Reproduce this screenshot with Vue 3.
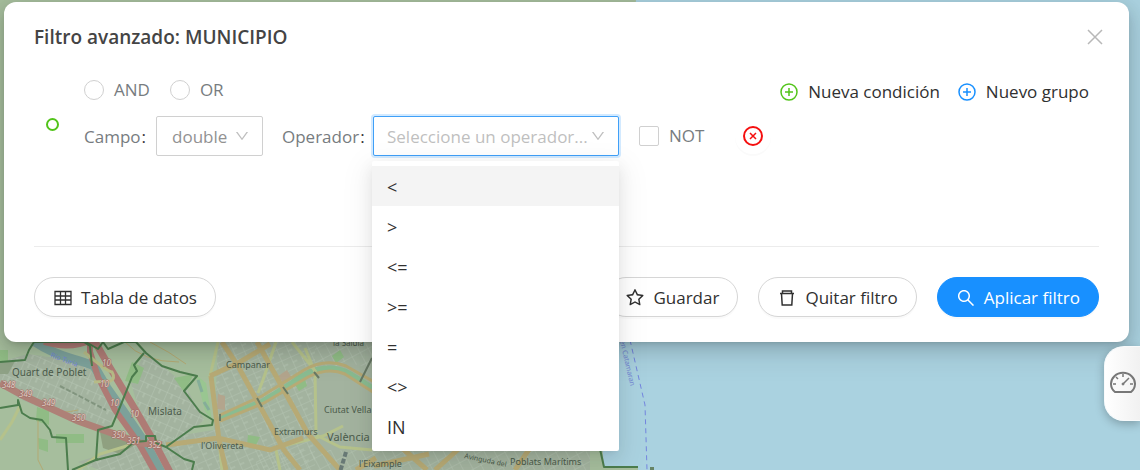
<script setup>
import { ref } from 'vue'

const logic = ref('')
const field = ref('double')
const operator = ref('')
const negate = ref(false)
const active = ref(0)
const operators = ['<', '>', '<=', '>=', '=', '<>', 'IN']

const down = 'M884 256h-75c-5.1 0-9.9 2.5-12.9 6.6L512 654.2 227.9 262.6c-3-4.1-7.8-6.6-12.9-6.6h-75c-6.5 0-10.3 7.4-6.5 12.7l352.6 486.1c12.8 17.6 39 17.6 51.7 0l352.6-486.1c3.9-5.3.1-12.7-6.4-12.7z'
const star = 'M908.1 353.1l-253.9-36.9L540.7 86.1c-3.1-6.3-8.2-11.4-14.5-14.5-15.8-7.8-35-1.3-42.9 14.5L369.8 316.2l-253.9 36.9c-7 1-13.4 4.3-18.3 9.3a32.05 32.05 0 00.6 45.3l183.7 179.1-43.4 252.9a31.95 31.95 0 0046.4 33.7L512 754l227.1 119.4c6.2 3.3 13.4 4.4 20.3 3.2 17.4-3 29.1-19.5 26.1-36.9l-43.4-252.9 183.7-179.1c5-4.9 8.3-11.3 9.3-18.3 2.7-17.5-9.5-33.7-27-36.3zM664.8 561.6l36.1 210.3L512 672.7 323.1 772l36.1-210.3-152.8-149L417.6 382 512 190.7 606.4 382l211.2 30.7-152.8 148.9z'
const search = 'M909.6 854.5L649.9 594.8C690.2 542.7 712 479 712 412c0-80.2-31.3-155.4-87.9-212.1-56.6-56.7-132-87.9-212.1-87.9s-155.5 31.3-212.1 87.9C143.2 256.5 112 331.8 112 412c0 80.1 31.3 155.5 87.9 212.1C256.5 680.8 331.8 712 412 712c67 0 130.6-21.8 182.7-62l259.7 259.6a8.2 8.2 0 0011.6 0l43.6-43.5a8.2 8.2 0 000-11.6zM570.4 570.4C528 612.7 471.8 636 412 636s-116-23.3-158.4-65.6C211.3 528 188 471.8 188 412s23.3-116.1 65.6-158.4C296 211.3 352.2 188 412 188s116.1 23.2 158.4 65.6S636 352.2 636 412s-23.3 116.1-65.6 158.4z'
</script>

<template>
  <main class="page">
    <svg class="map" viewBox="0 0 1140 470" preserveAspectRatio="xMinYMin slice" aria-hidden="true">
      <defs>
        <pattern id="streets-a" width="13" height="10" patternUnits="userSpaceOnUse" patternTransform="rotate(24)">
          <path d="M0 0H13M0 0V10M6 0V5" fill="none" stroke="#b6c6b3" stroke-width="1" />
        </pattern>
        <pattern id="streets-b" width="10" height="12" patternUnits="userSpaceOnUse" patternTransform="rotate(-24)">
          <path d="M0 0H10M0 0V12M0 6H5" fill="none" stroke="#b4c4b1" stroke-width="1" />
        </pattern>
        <pattern id="streets-c" width="12" height="9" patternUnits="userSpaceOnUse" patternTransform="rotate(62)">
          <path d="M0 0H12M0 0V9" fill="none" stroke="#b4c4b1" stroke-width="1" />
        </pattern>
      </defs>
      <rect width="1140" height="470" fill="#aad2e0" />
      <path d="M0 0H636L598 400 604 466 638 468V470H0Z" fill="#a6be9d" />

      <!-- built-up areas -->
      <g fill="#a3b39f">
        <path d="M28 354L84 362 98 380 118 410 108 428 70 420 22 400 0 385V362Z" />
        <path d="M130 380L146 352 184 384 204 420 190 432 164 446 142 420Z" />
        <path d="M218 342H372V470H190L100 470 78 462 140 442 214 430Z" />
        <path d="M372 440H590V470H372Z" />
      </g>
      <path d="M28 354L84 362 98 380 118 410 108 428 70 420 22 400 0 385V362Z" fill="url(#streets-a)" />
      <path d="M130 380L146 352 184 384 204 420 190 432 164 446 142 420Z" fill="url(#streets-a)" />
      <path d="M218 342H315V470H78L140 442 214 430Z" fill="url(#streets-b)" />
      <path d="M315 342H372V368L345 362 315 376ZM256 450H372V470H256ZM372 440H590V470H372Z" fill="url(#streets-c)" />

      <!-- parks and fields -->
      <g fill="#90bc85">
        <path d="M37 407l12 4v14l-13-4zM56 434h28v9H56zM38 438l10 2v12l-9-3zM132 362l12 6-6 16-13-3zM174 378l20-4-10 18zM292 380l10-10 5 16-8 5zM0 350h8v20H0zM248 435l12 2-5 10-8-2zM332 356l8-6 4 7-8 6z" />
      </g>
      <path d="M196 375l9 36 7 10-6-38z" fill="#99c691" />
      <path d="M220 418L262 402 310 372Q332 364 350 374L372 388" fill="none" stroke="#8abc91" stroke-width="6" />
      <path d="M198 380l4 12M204 402l5 8" fill="none" stroke="#85ad99" stroke-width="3" />
      <g fill="#b3a58d"><path d="M218 394l7 2v14l-8-1zM278 376l9-6 5 8-8 6z" /></g>
      <path d="M100 432l18 4 17 9-15 9-17-6z" fill="#8fa080" />
      <path d="M0 361H15l-7 13H0Z" fill="#8fa286" />

      <!-- secondary roads -->
      <g fill="none" stroke="#b5c28b" stroke-width="3">
        <path d="M218 342L210 376 219 440 222 470M276 342L263 380 258 393M305 348L315 372 316 432M316 435L340 447 372 450M78 470L100 454 130 445M0 440l12-18 8-16M283 446l40-10 20-10M280 470l-4-20M292 342l24 30" />
      </g>
      <path d="M125 342q18 20 54 20M150 342q20 10 36 22M38 420v40l5 10M48 410q15 4 30 0" fill="none" stroke="#b3a973" stroke-width="1" />
      <g fill="none" stroke="#b7aa75" stroke-width="5">
        <path d="M222 342L238 366 262 410 284 450 300 470M257 342L276 376 308 434 340 470M210 376L240 362 270 344M211 376L219 440M166 445L218 438 270 450 303 438M219 440L226 470" />
        <path d="M220 415L262 396 304 370Q325 358 346 366L376 383M220 421L264 403 308 377Q328 367 345 374L376 394" stroke-width="3" />
        <path d="M356 470l20-12M374 466l55-12M402 448l25 22M435 470l28-25M515 470l15-22" />
      </g>
      <path d="M220 414v7M257 398l5 9M283 387l5 7M314 372l5 6M372 358l-12 24" stroke="#687965" stroke-width="2" />
      <path d="M346 452l-6 20" stroke="#687975" stroke-width="4" stroke-dasharray="5 2" />

      <!-- river and motorways -->
      <g fill="none">
        <path d="M35 342Q50 352 70 358T94 366L107 388 126 415 147 446 163 476" stroke="#7ca19a" stroke-width="9" />
        <path d="M44 342Q70 350 92 340M90 342L90 352 98 377 115 410 138 442 156 474" stroke="#ae7b75" stroke-width="6" />
        <path d="M94 340L109 366 135 409 153 440 171 474" stroke="#ae7b75" stroke-width="7" />
        <path d="M0 383L24 396 78 421 140 443 162 445" stroke="#ae8177" stroke-width="7" />
        <path d="M84 352q24 20 28 20 4 7-2 9l-16 1" stroke="#b6bb86" stroke-width="3" />
        <path d="M60 386L106 410" stroke="#82957f" stroke-width="2" stroke-dasharray="5 2" />
      </g>

      <!-- municipal boundaries -->
      <g fill="none" stroke="#4c7d4d" stroke-width="2" stroke-linejoin="round">
        <path d="M0 362L25 360 29 350 34 342H86L98 349 103 342 108 349 124 342H136L146 353 162 366 180 372 197 376 184 391 200 412 213 420 212 425 194 427 166 447 156 443 155 436H146V441L134 442 120 454 96 460 98 430 112 426 120 407 132 377 137 371 134 365 144 353M0 408L18 405V400L22 413 30 418 42 420 50 430 52 437 66 438 68 470" />
        <path d="M166 447L184 459 194 462 192 470M84 342l6 4 2 20M72 470l26-11M598 440L604 467H638" />
      </g>

      <g class="places">
        <text x="12" y="376" font-size="10">Quart de Poblet</text>
        <text x="148" y="415" font-size="10">Mislata</text>
        <text x="226" y="368" font-size="9">Campanar</text>
        <text x="333" y="346" font-size="8">la Saïdia</text>
        <text x="324" y="413" font-size="9">Ciutat Vella</text>
        <text x="274" y="435" font-size="9">Extramurs</text>
        <text x="327" y="441" font-size="11">València</text>
        <text x="201" y="449" font-size="9">l'Olivereta</text>
        <text x="359" y="467" font-size="9">l'Eixample</text>
        <text x="510" y="465" font-size="9">Poblats Marítims</text>
        <text x="464" y="458" font-size="7" transform="rotate(12 464 458)">Avinguda del</text>
      </g>
      <g class="roads">
        <text x="2" y="388">348</text><text x="19" y="397">349</text><text x="42" y="406">349</text>
        <text x="72" y="421">350</text><text x="112" y="438">350</text><text x="127" y="444">351</text><text x="148" y="448">352</text>
        <text x="102" y="366">10</text><text x="100" y="387">10</text><text x="110" y="406">10</text><text x="130" y="417">10</text>
      </g>
      <text class="water" x="50" y="357" transform="rotate(20 50 357)">Río Turia</text>
      <text class="water" x="620" y="341" transform="rotate(77 620 341)">en Catamaran</text>
      <path d="M630 340L645 405 647 470" fill="none" stroke="#7486df" stroke-width="1" stroke-dasharray="5 4" />
      <path d="M650 470v-3h4v3" fill="#668466" />
    </svg>

    <section class="modal" role="dialog" aria-labelledby="filter-title">
      <header class="head">
        <h1 id="filter-title">Filtro avanzado: MUNICIPIO</h1>
        <button class="plain close" aria-label="Cerrar">
          <svg width="16" height="16" viewBox="0 0 16 16"><path d="M1 1L15 15M15 1L1 15" fill="none" stroke="#b8b8b8" stroke-width="1.5" /></svg>
        </button>
      </header>

      <div class="body">
        <span class="node"></span>
        <div class="group">
          <div class="toolbar">
            <div class="logic">
              <label><input v-model="logic" type="radio" name="logic" value="AND">AND</label>
              <label><input v-model="logic" type="radio" name="logic" value="OR">OR</label>
            </div>
            <div class="adders">
              <button class="plain">
                <svg class="green" width="18" height="18" viewBox="0 0 18 18"><path d="M9 5V13M5 9H13" /><circle cx="9" cy="9" r="8" /></svg>Nueva condición
              </button>
              <button class="plain">
                <svg class="blue" width="18" height="18" viewBox="0 0 18 18"><path d="M9 5V13M5 9H13" /><circle cx="9" cy="9" r="8" /></svg>Nuevo grupo
              </button>
            </div>
          </div>

          <div class="condition">
            <label class="caption" for="field">Campo<b>:</b></label>
            <div class="select field">
              <select id="field" v-model="field"><option>double</option></select>
              <svg class="arrow" width="14" height="14" viewBox="64 64 896 896"><path :d="down" /></svg>
            </div>
            <label class="caption operator-caption" for="operator">Operador<b>:</b></label>
            <div class="select operator">
              <select id="operator" v-model="operator">
                <option value="">Seleccione un operador...</option>
                <option v-for="op in operators" :key="op">{{ op }}</option>
              </select>
              <svg class="arrow" width="14" height="14" viewBox="64 64 896 896"><path :d="down" /></svg>
              <ul class="menu" role="listbox" aria-label="Operador">
                <li v-for="(op, i) in operators" :key="op" role="option" :aria-selected="i === active" :class="{ active: i === active }" @mouseenter="active = i" @click="operator = op">{{ op }}</li>
              </ul>
            </div>
            <label class="not"><input v-model="negate" type="checkbox">NOT</label>
            <button class="plain remove" aria-label="Eliminar condición">
              <svg width="20" height="20" viewBox="0 0 20 20"><circle cx="10" cy="10" r="9" /><path d="M7 7L13 13M13 7L7 13" /></svg>
            </button>
          </div>
        </div>
      </div>

      <footer class="foot">
        <button class="pill">
          <svg width="18" height="18" viewBox="0 0 18 18"><path d="M1 2.5H17V15.5H1ZM1 7H17M1 11H17M6.500 2.500V15.500M11.500 2.500V15.500" fill="none" stroke="currentColor" stroke-width="1.3" /></svg>Tabla de datos
        </button>
        <span class="grow"></span>
        <button class="pill">
          <svg width="18" height="18" viewBox="64 64 896 896"><path :d="star" fill="currentColor" /></svg>Guardar
        </button>
        <button class="pill">
          <svg width="18" height="18" viewBox="0 0 18 18"><path d="M2 4.500H16M4.500 4.500V2H13.500V4.500M3.500 4.500L4.200 16H13.800L14.500 4.500" fill="none" stroke="currentColor" stroke-width="1.5" /></svg>Quitar filtro
        </button>
        <button class="pill primary">
          <svg width="18" height="18" viewBox="64 64 896 896"><path :d="search" fill="currentColor" /></svg>Aplicar filtro
        </button>
      </footer>
    </section>

    <button class="gauge" aria-label="Panel de indicadores">
      <svg width="26" height="24" viewBox="0 0 26 24"><path d="M5 22A12 11 0 1 1 21 22Z" stroke-width="2" /><path d="M13 4V7M6 7L8 9M3 14H6M20 14H23M13 14L19 8" stroke-width="1.5" /><circle cx="13" cy="14" r="1" fill="#777" /></svg>
    </button>
  </main>
</template>

<style>
body {
  background: #aad2e0;
}
</style>

<style scoped>
.page {
  position: relative;
  box-sizing: border-box;
  min-height: 100vh;
  padding: 2px 11px 0 4px;
  overflow: hidden;
  font: 17px/24px "Open Sans", "Noto Sans", sans-serif;
  color: #303030;
}
.page button,
.page select {
  font: inherit;
}
.map {
  position: absolute;
  inset: 0;
  width: 100%;
  height: 100%;
}
.places {
  font-family: "Noto Sans", sans-serif;
  fill: #4b5b4b;
}
.roads {
  font: italic 8px "Noto Sans", sans-serif;
  fill: #dccfc6;
  stroke: #a36d65;
  stroke-width: 1px;
  paint-order: stroke;
}
.water {
  font: 7px "Noto Sans", sans-serif;
  fill: #7487d4;
}
.modal {
  position: relative;
  padding: 20px 30px 25px;
  background: #fff;
  border-radius: 12px;
  box-shadow: 0 3px 6px -4px rgba(0, 0, 0, 0.24), 0 6px 16px rgba(0, 0, 0, 0.14), 0 9px 28px 8px rgba(0, 0, 0, 0.08);
}
.head {
  display: flex;
  align-items: center;
  justify-content: space-between;
  height: 30px;
}
h1 {
  margin: 0;
  font-size: 19px;
  font-weight: 600;
  color: #444;
}
.plain {
  display: flex;
  align-items: center;
  padding: 0;
  border: 0;
  background: none;
  color: inherit;
}
.close {
  width: 16px;
  margin-right: -4px;
}
.body {
  display: flex;
  gap: 20px;
  height: 170px;
  padding: 24px 0 0 12px;
  border-bottom: 1px solid #ececec;
}
.node {
  box-sizing: border-box;
  flex: none;
  width: 13px;
  height: 13px;
  margin-top: 42px;
  border: 2px solid #52c41a;
  border-radius: 50%;
}
.group {
  flex: 1;
  padding-left: 5px;
}
.toolbar {
  display: flex;
  justify-content: space-between;
  height: 28px;
  margin-bottom: 12px;
}
.logic,
.adders,
.logic label,
.not {
  display: flex;
  align-items: center;
}
.logic {
  gap: 20px;
  color: #777c80;
}
.logic label,
.not {
  gap: 10px;
}
.adders {
  gap: 18px;
  padding: 3px 10px 0 0;
}
.adders .plain {
  gap: 10px;
}
.adders svg,
.remove svg,
.gauge svg {
  fill: none;
}
.green {
  stroke: #52c41a;
  stroke-width: 1.5px;
}
.blue {
  stroke: #1890ff;
  stroke-width: 1.5px;
}
input {
  appearance: none;
  box-sizing: border-box;
  width: 20px;
  height: 20px;
  margin: 0;
  border: 1px solid #d0d0d0;
  border-radius: 2px;
  background: #fff;
}
input[type="radio"] {
  border-radius: 50%;
}
input:checked {
  border: 6px solid #1890ff;
}
.condition {
  display: flex;
  align-items: center;
  height: 40px;
}
.caption {
  display: flex;
  gap: 1px;
  width: 72px;
  padding-top: 2px;
  color: #777c80;
}
.caption b {
  font-weight: 400;
  color: #333;
}
.operator-caption {
  width: 91px;
  margin-left: 19px;
}
.select {
  position: relative;
  height: 40px;
}
.field {
  width: 107px;
}
.operator {
  width: 246px;
}
select {
  appearance: none;
  box-sizing: border-box;
  width: 100%;
  height: 40px;
  padding: 2px 0 0 15px;
  border: 1px solid #d0d0d0;
  border-radius: 2px;
  background: #fff;
  color: #929292;
}
.operator select {
  padding-left: 13px;
  border-color: #40a0f8;
  box-shadow: 0 0 0 2px #d3eaff;
  color: #bfbfbf;
}
.arrow {
  position: absolute;
  top: 13px;
  right: 14px;
  fill: #bfbfbf;
  pointer-events: none;
}
.menu {
  position: absolute;
  z-index: 2;
  top: 45px;
  right: 0;
  left: -1px;
  margin: 0;
  padding: 5px 0;
  list-style: none;
  font-size: 18px;
  background: #fff;
  border-radius: 2px;
  box-shadow: 0 3px 6px -4px rgba(0, 0, 0, 0.12), 0 6px 16px rgba(0, 0, 0, 0.08), 0 9px 28px 8px rgba(0, 0, 0, 0.05);
}
.menu li {
  padding: 9px 15px 7px;
}
.menu .active {
  background: #f4f4f4;
}
.not {
  margin-left: 20px;
  color: #777c80;
}
.remove {
  margin-left: 31px;
  padding: 8px;
  border-radius: 50%;
  box-shadow: 0 2px 0 rgba(0, 0, 0, 0.02);
}
.remove svg {
  stroke: #f50f0f;
  stroke-width: 2px;
}
.remove path {
  stroke-width: 1.5px;
}
.foot {
  display: flex;
  gap: 20px;
  padding-top: 30px;
}
.grow {
  flex: 1;
}
.pill {
  display: flex;
  align-items: center;
  gap: 9px;
  height: 40px;
  padding: 2px 18px 0 19px;
  border: 1px solid #d6d6d6;
  border-radius: 20px;
  background: #fff;
  box-shadow: 0 2px 0 rgba(0, 0, 0, 0.02);
  color: #303030;
}
.pill.primary {
  border-color: #1890ff;
  background: #1890ff;
  color: #fff;
}
.gauge {
  position: absolute;
  top: 346px;
  right: 0;
  width: 36px;
  height: 75px;
  padding: 0 0 3px 5px;
  border: 1px solid #f8fafb;
  border-right: 0;
  border-radius: 20px 0 0 20px;
  background: linear-gradient(90deg, #fff, #f1f1f1);
  box-shadow: 0 3px 10px rgba(0, 0, 0, 0.25);
}
.gauge svg {
  display: block;
  stroke: #777;
}
</style>
